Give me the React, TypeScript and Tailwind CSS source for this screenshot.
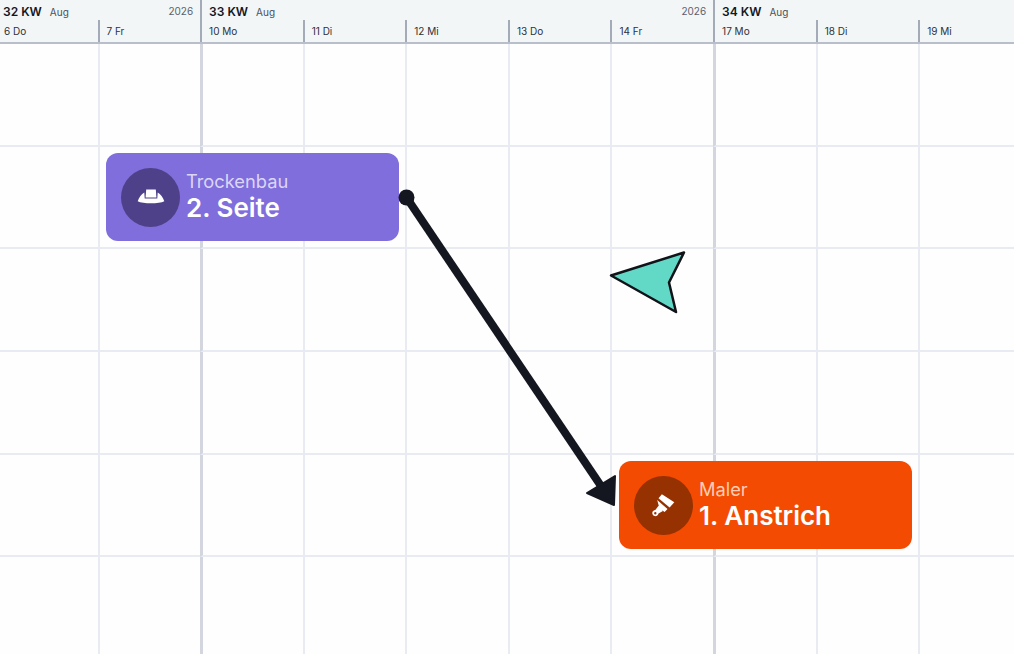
const days = ["6 Do", "7 Fr", "10 Mo", "11 Di", "12 Mi", "13 Do", "14 Fr", "17 Mo", "18 Di", "19 Mi"];

const weeks = [
  { kw: "32 KW", year: "2026", w: 200.1 },
  { kw: "33 KW", year: "2026", w: 513 },
  { kw: "34 KW", year: "", w: 300.9 },
];

function HardHat() {
  return (
    <svg width="28" height="15" viewBox="0 0 28 15" fill="white" className="-translate-y-px">
      <path d="M9.200.6H18.800L19.400 8.400H8.600z" />
      <path d="M7.300 3.400 7.700 9.400H20.300L20.700 3.400C23.600 5 26 8.300 27.300 12.300 22 15 6 15 .7 12.300 2 8.300 4.400 5 7.300 3.400z" />
    </svg>
  );
}

function Brush() {
  return (
    <svg width="24" height="23" viewBox="0 0 24 23" fill="white">
      <path d="M9.900.3 22.300 8.300 17.600 13.600 6.500 4.300z" />
      <path d="M5.200 6 15.500 15 12.600 18 10 16.200 7.800 15.400z" />
      <path fillRule="evenodd" d="M6.600 11.700 10.900 17 6.500 19.400C6 21.300 4.400 22.400 2.900 22.100 1 21.700-.1 19.900.4 18.200.8 16.800 2 16 3.300 15.900zM3.300 18.100a1.200 1.200 0 1 0 .01 2.400 1.200 1.200 0 0 0-.01-2.400z" />
    </svg>
  );
}

function Card({ bg, circle, sub, subColor, title, icon, className }: { bg: string; circle: string; sub: string; subColor: string; title: string; icon: React.ReactNode; className: string }) {
  return (
    <div className={`absolute flex h-[88px] w-[293px] items-center gap-[6px] rounded-[12px] pl-[15px] ${bg} ${className}`}>
      <div className={`flex h-[59px] w-[59px] items-center justify-center rounded-full ${circle}`}>{icon}</div>
      <div className="flex flex-col gap-px">
        <span className={`text-[18.300px] leading-[20px] ${subColor}`}>{sub}</span>
        <span className="text-[26px] font-semibold leading-[32px] text-white">{title}</span>
      </div>
    </div>
  );
}

export default function App() {
  return (
    <div className="relative h-[654px] w-[1014px] overflow-hidden bg-[#fefefe] font-['Inter',sans-serif]">
      <header className="flex h-[44px] flex-col overflow-hidden border-b-2 border-[#b8bfcb] bg-[#f2f6f7]">
        <div className="flex h-[20px]">
          {weeks.map((w, i) => (
            <div key={w.kw} className={`flex shrink-0 items-center justify-between pr-[7px] pt-[3px] ${i > 0 ? "border-l-2 border-[#a3abb8] pl-[7px]" : "pl-[3px]"}`} style={{ width: w.w }}>
              <div className="flex items-baseline gap-[8px]">
                <span className="text-[12px] font-semibold text-[#14171f]">{w.kw}</span>
                <span className="text-[10px] text-[#4a505c]">Aug</span>
              </div>
              <span className="text-[10px] text-[#5b616c]">{w.year}</span>
            </div>
          ))}
        </div>
        <div className="grid h-[22px] grid-cols-[97.5px_repeat(9,102.6px)]">
          {days.map((d, i) => (
            <div key={d} className={`pt-[3px] text-[10px] leading-[16px] text-[#2c313b] ${i > 0 ? "border-l-2 border-[#a3abb8] pl-[7px]" : "pl-[4px]"}`}>
              {d}
            </div>
          ))}
        </div>
      </header>
      <div className="grid grid-cols-[97.5px_repeat(9,102.6px)] grid-rows-[102.9px_102.6px_102.6px_102.6px_102.6px_102.6px]">
        {Array.from({ length: 60 }).map((_, i) => {
          const c = i % 10;
          const thick = c === 2 || c === 7;
          const left = c === 0 ? "" : thick ? "border-l-[3px] border-l-[#d3d5df]" : "border-l-2 border-l-[#e9ebf2]";
          return <div key={i} className={`border-b-2 border-b-[#e9ebf2] ${left}`} />;
        })}
      </div>
      <Card bg="bg-[#7f6edb]" circle="bg-[#4f4189]" sub="Trockenbau" subColor="text-[#dcd6f6]" title="2. Seite" icon={<HardHat />} className="left-[106px] top-[153px]" />
      <Card bg="bg-[#f44b03]" circle="bg-[#963102]" sub="Maler" subColor="text-[#fdcdb5]" title="1. Anstrich" icon={<Brush />} className="left-[619px] top-[461px]" />
      <svg className="absolute left-0 top-0" width="1014" height="654" viewBox="0 0 1014 654" fill="none">
        <circle cx="406.500" cy="197.500" r="8" fill="#14171f" />
        <path d="M406.500 197.500 601 486" stroke="#14171f" strokeWidth="8" />
        <path d="M587 493 615 476 614 505z" fill="#14171f" stroke="#14171f" strokeWidth="2" strokeLinejoin="round" />
        <path d="M611 275.500 684 252.500 669 282.500 676 312z" fill="#62d8c6" stroke="#111318" strokeWidth="2.500" strokeLinejoin="round" />
      </svg>
    </div>
  );
}
